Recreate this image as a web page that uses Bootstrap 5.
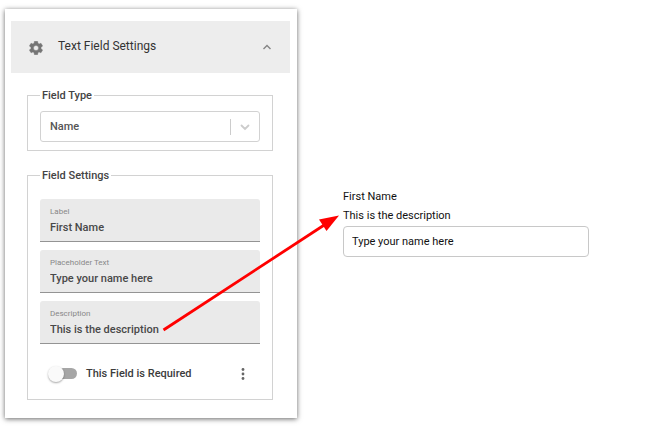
<!DOCTYPE html>
<html lang="en">
<head>
<meta charset="utf-8">
<meta name="viewport" content="width=device-width, initial-scale=1">
<title>Text Field Settings</title>
<link href="https://cdn.jsdelivr.net/npm/bootstrap@5.3.0/dist/css/bootstrap.min.css" rel="stylesheet">
<style>
body { font-family: Roboto, "Liberation Sans", sans-serif; font-size: 11px; line-height: 16px; color: #484848; background: #fff; }
.workspace { padding: 9px 5px; }
.settings-panel { flex: 0 0 292px; padding: 12px 7px 18px 6px; background: #fff; box-shadow: 0 1px 5px rgba(0,0,0,.6); }
.settings-panel legend, .settings-panel select, .settings-panel input, .required-row label { font-weight: 500; }
.panel-toggle { height: 52px; padding: 0 18px; background: #ededed; color: #333; font-size: 12px; }
.panel-toggle .gear { margin-right: 15px; margin-top: 2px; }
.panel-title { margin-bottom: 2px; }
.field-group { margin: 0 17px 0 16px; padding: 0 12px; border: 1px solid #d2d2d2; }
.group-type { margin-top: 14px; padding-top: 7px; padding-bottom: 8px; }
.group-settings { margin-top: 16px; padding-top: 15px; padding-bottom: 12px; }
.field-group legend { float: none; width: auto; margin: 0; padding: 1px 2px 0; font-size: 11px; line-height: 16px; color: #444; }
.type-picker { border: 1px solid #d2d2d2; border-radius: 3px; height: 31px; }
.type-picker select { appearance: none; border: 0; background: transparent; padding: 0 9px; color: #555; outline: 0; }
.picker-mark { pointer-events: none; border-left: 1px solid #ccc; height: 16px; width: 29px; }
.filled-field { height: 43px; padding: 6px 10px 0; background: #eaeaea; border-bottom: 1px solid #949494; border-radius: 3px 3px 0 0; }
.filled-field label { font-size: 8px; line-height: 14px; color: #888; }
.filled-field input { border: 0; padding: 0; background: transparent; line-height: 16px; height: 17px; color: #484848; outline: 0; }
.field-stack { gap: 8px; }
.required-row { height: 28px; margin-top: 15px; padding: 1px 8px 0; }
.required-row label { color: #3c3c3c; }
.toggle-input { appearance: none; margin: 0 9px 0 0; width: 29px; height: 16px; display: flex; align-items: center; }
.toggle-input::before { content: ""; flex: none; width: 16px; height: 16px; border-radius: 50%; background: #fafafa; box-shadow: 0 1px 2px rgba(0,0,0,.35); z-index: 1; }
.toggle-input::after { content: ""; flex: none; width: 21px; height: 11px; margin-left: -8px; border-radius: 6px; background: #a6a6a6; }
.preview { margin-left: 46px; margin-right: 64px; padding-top: 180px; color: #111; min-width: 0; }
.preview p { line-height: 16px; }
.preview label { line-height: 16px; margin-bottom: 3px; }
.preview input { margin-top: 2px; height: 31px; padding: 0 8px; border: 1px solid #c8c8c8; border-radius: 4px; color: #111; }
.preview input::placeholder { color: #111; opacity: 1; }
.pointer-arrow { left: 0; top: 0; pointer-events: none; }
</style>
</head>
<body>
<main class="workspace position-relative d-flex align-items-start">
  <section class="settings-panel">
    <button type="button" class="panel-toggle btn rounded-0 border-0 w-100 d-flex align-items-center" aria-expanded="true">
      <svg class="gear" width="14" height="14" viewBox="2 2 20 20" fill="#757575" stroke="#757575" stroke-width=".6" aria-hidden="true"><path d="M19.14 12.94c.04-.3.06-.61.06-.94s-.02-.64-.07-.94l2.03-1.58a.49.49 0 0 0 .12-.61l-1.92-3.32a.49.49 0 0 0-.59-.22l-2.39.96c-.5-.38-1.03-.7-1.62-.94l-.36-2.54a.48.48 0 0 0-.48-.41h-3.84a.47.47 0 0 0-.47.41l-.36 2.54c-.59.24-1.13.57-1.62.94l-2.39-.96a.48.48 0 0 0-.59.22L2.74 8.87a.47.47 0 0 0 .12.61l2.03 1.58c-.05.3-.09.63-.09.94s.02.64.07.94l-2.03 1.58a.49.49 0 0 0-.12.61l1.92 3.32c.12.22.37.29.59.22l2.39-.96c.5.38 1.03.7 1.62.94l.36 2.54c.05.24.24.41.48.41h3.84c.24 0 .44-.17.47-.41l.36-2.54c.59-.24 1.13-.56 1.62-.94l2.39.96c.22.08.47 0 .59-.22l1.92-3.32a.47.47 0 0 0-.12-.61zM12 15.6a3.6 3.6 0 1 1 0-7.2 3.6 3.6 0 0 1 0 7.2z"/></svg>
      <span class="panel-title">Text Field Settings</span>
      <svg class="ms-auto" width="10" height="8" viewBox="0 0 10 8" fill="none" stroke="#858585" stroke-width="1.4" aria-hidden="true"><path d="M1.5 6 5 2.5 8.5 6"/></svg>
    </button>

    <fieldset class="field-group group-type">
      <legend>Field Type</legend>
      <div class="type-picker d-flex align-items-center">
        <select class="flex-grow-1" aria-label="Field Type"><option>Name</option></select>
        <span class="picker-mark d-flex align-items-center justify-content-center">
          <svg width="10" height="8" viewBox="0 0 10 8" fill="none" stroke="#ccc" stroke-width="1.8" stroke-linecap="round" aria-hidden="true"><path d="M1.5 2.5 5 6 8.5 2.5"/></svg>
        </span>
      </div>
    </fieldset>

    <fieldset class="field-group group-settings">
      <legend>Field Settings</legend>
      <div class="field-stack d-flex flex-column">
        <div class="filled-field d-flex flex-column">
          <label for="fieldLabel">Label</label>
          <input id="fieldLabel" type="text" value="First Name">
        </div>
        <div class="filled-field d-flex flex-column">
          <label for="fieldPlaceholder">Placeholder Text</label>
          <input id="fieldPlaceholder" type="text" value="Type your name here">
        </div>
        <div class="filled-field d-flex flex-column">
          <label for="fieldDescription">Description</label>
          <input id="fieldDescription" type="text" value="This is the description">
        </div>
      </div>
      <div class="required-row d-flex align-items-center">
        <input class="toggle-input" id="fieldRequired" type="checkbox" role="switch">
        <label for="fieldRequired">This Field is Required</label>
        <button type="button" class="btn border-0 p-0 ms-auto d-flex" aria-label="More options">
          <svg width="18" height="14" viewBox="0 0 18 14" fill="#666" aria-hidden="true"><circle cx="9" cy="2.5" r="1.4"/><circle cx="9" cy="7" r="1.4"/><circle cx="9" cy="11.5" r="1.4"/></svg>
        </button>
      </div>
    </fieldset>
  </section>

  <section class="preview flex-grow-1 d-flex flex-column">
    <label for="previewName">First Name</label>
    <p class="mb-0" id="previewHelp">This is the description</p>
    <input id="previewName" class="w-100" type="text" placeholder="Type your name here" aria-describedby="previewHelp">
  </section>

  <svg class="pointer-arrow position-absolute" width="345" height="340" viewBox="0 0 345 340" aria-hidden="true">
    <path d="M163.500 330 325 224.500" stroke="#f00" stroke-width="2.800"/>
    <path d="M339 215.500 319 219.500 326.500 231z" fill="#f00"/>
  </svg>
</main>
<script src="https://cdn.jsdelivr.net/npm/bootstrap@5.3.0/dist/js/bootstrap.bundle.min.js"></script>
</body>
</html>
